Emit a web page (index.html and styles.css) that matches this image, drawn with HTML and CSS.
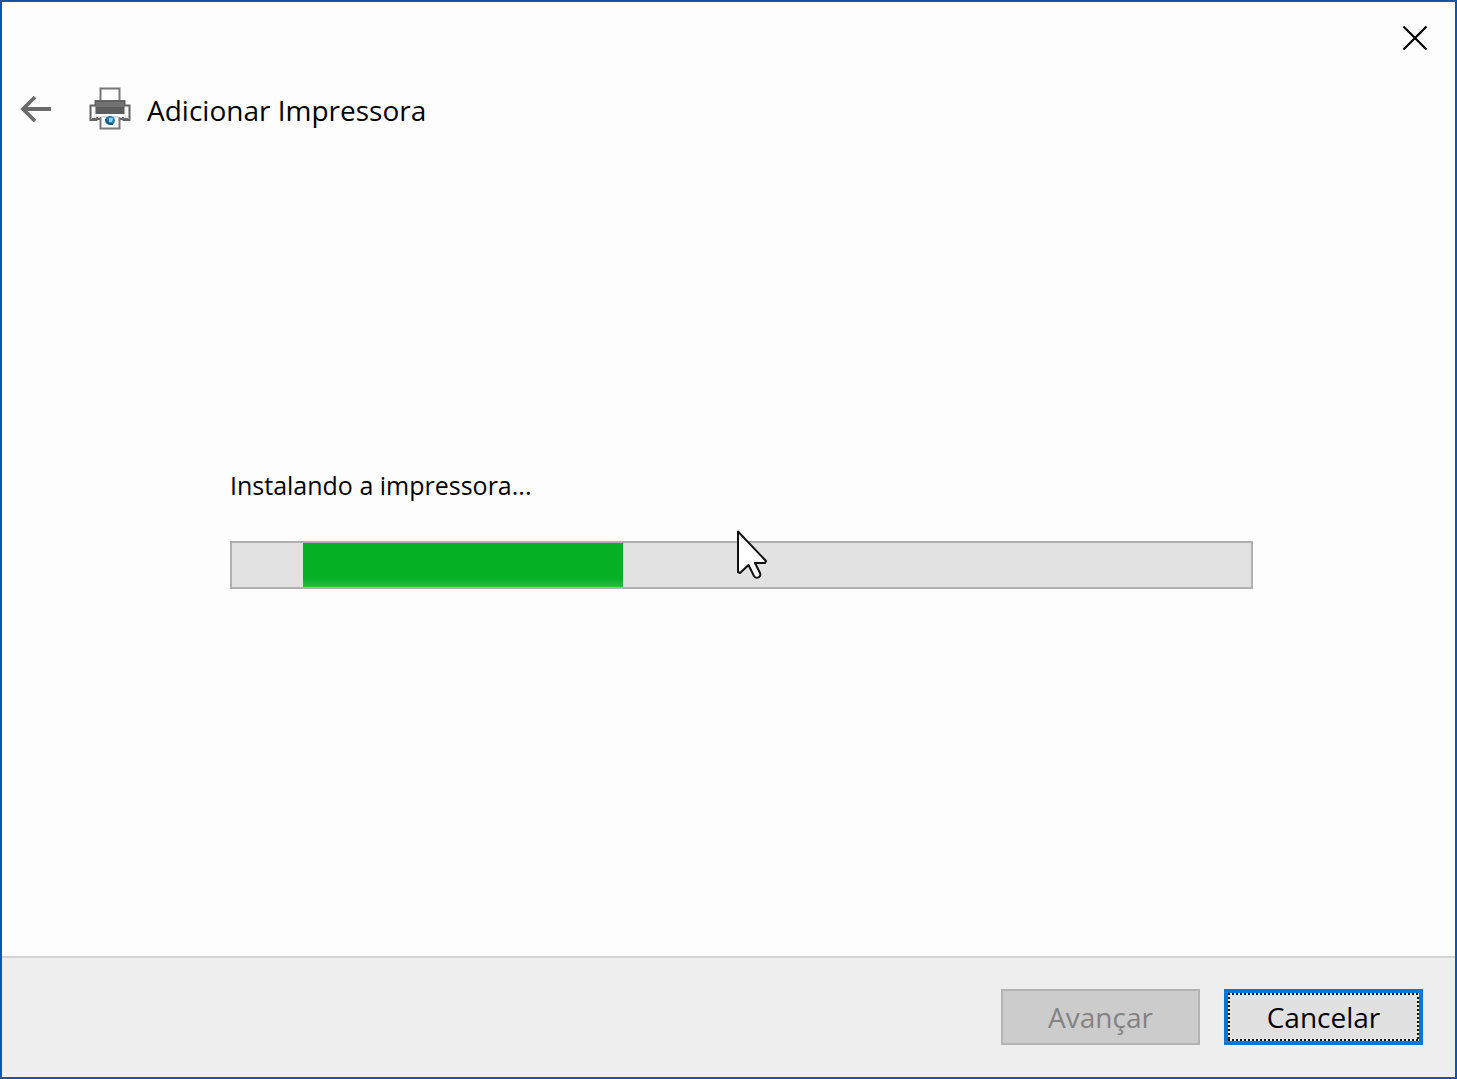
FILE: index.html
```html
<!DOCTYPE html>
<html lang="pt-BR">
<head>
<meta charset="utf-8">
<meta name="viewport" content="width=device-width, initial-scale=1">
<title>Adicionar Impressora</title>
<link rel="stylesheet" href="styles.css">
</head>
<body>
<div class="wizard" role="dialog" aria-labelledby="wizard-title">
  <div class="titlebar">
    <button class="icon-button close" type="button" aria-label="Fechar">
      <svg width="28" height="28" viewBox="0 0 28 28" aria-hidden="true">
        <path d="M2.500 2.500 25.500 25.500M25.500 2.500 2.500 25.500" fill="none" stroke="#000" stroke-width="2.200"/>
      </svg>
    </button>
  </div>

  <header class="header">
    <button class="icon-button" type="button" aria-label="Voltar">
      <svg width="32" height="28" viewBox="0 0 32 28" aria-hidden="true">
        <path d="M32 15H4M16 3 4 15 16 27" fill="none" stroke="#6b6b6b" stroke-width="3.800"/>
      </svg>
    </button>
    <svg class="printer" width="42" height="43" viewBox="0 0 42 43" aria-hidden="true">
      <path d="M11.500 16V1.500h19V16" fill="#fff" stroke="#777" stroke-width="2"/>
      <path d="M1.500 18.500h5V14h29v4.500h5V33h-6l-1.500-5h-24l-1.500 5h-6z" fill="#eee" stroke="#666" stroke-width="2"/>
      <path d="M6.500 14.500h29V27h-29z" fill="#5b5b5b"/>
      <path d="M7 15h28v5H7z" fill="#727272"/>
      <path d="M4 21v10M38 21v10" stroke="#fff" stroke-width="2"/>
      <path d="M8 27h26l1 3H7z" fill="#fff"/>
      <path d="M3 32h36" stroke="#666" stroke-width="2"/>
      <path d="M11.500 30v11.500h19V30" fill="#fff" stroke="#777" stroke-width="2"/>
      <path d="M12.500 30h17" stroke="#bbb"/>
      <ellipse cx="21" cy="33.500" rx="5" ry="4.500" fill="#257eac"/>
      <path d="M20 31q4-1 4 1l-1 3h-3z" fill="#8bd0e6"/>
      <path d="M17 32q1 6 7 5" fill="none" stroke="#174d72" stroke-width="1.500"/>
    </svg>
    <h1 class="title" id="wizard-title">Adicionar Impressora</h1>
  </header>

  <main class="content">
    <p class="status" id="status">Instalando a impressora...</p>
    <div class="progress" role="progressbar" aria-labelledby="status">
      <div class="progress-chunk"></div>
      <svg class="cursor" width="32" height="52" viewBox="0 0 32 52" aria-hidden="true">
        <path d="M2 2.500V43l2 1 8.500-8 5.500 11q2 3 5 1 2-1 1-4l-5-10h10l1-2z" fill="#fff" stroke="#111" stroke-width="2" stroke-linejoin="round"/>
      </svg>
    </div>
  </main>

  <footer class="footer">
    <button class="button" type="button" disabled>Avançar</button>
    <button class="button button-default" type="button">Cancelar</button>
  </footer>
</div>
</body>
</html>
```
FILE: styles.css
```css
* {
  box-sizing: border-box;
}

body {
  margin: 0;
  font-family: "Open Sans", "Noto Sans", sans-serif;
  color: #000;
}

.wizard {
  display: flex;
  flex-direction: column;
  min-height: 100vh;
  border: 2px solid #0b57b0;
  background: #fdfdfd;
}

.titlebar {
  display: flex;
  justify-content: flex-end;
  padding: 22px 26px 0;
}

.icon-button {
  display: flex;
  padding: 0;
  border: 0;
  background: none;
}

.header {
  display: flex;
  align-items: center;
  padding: 30px 17px 0;
}

.printer {
  margin: 0 16px 0 38px;
}

.title {
  margin: 0;
  padding-top: 4px;
  font-size: 28px;
  line-height: 48px;
  font-weight: 400;
}

.content {
  flex: 1;
  padding: 331px 202px 48px 228px;
}

.status {
  margin: 0;
  font-size: 25px;
  line-height: 40px;
}

.progress {
  position: relative;
  height: 48px;
  margin-top: 36px;
  border: 2px solid #b0b0b0;
  background: #e2e2e2;
}

.progress-chunk {
  width: 320px;
  height: 100%;
  margin-left: 71px;
  background: linear-gradient(#06b025 80%, #2cba48);
}

.cursor {
  position: absolute;
  top: -14px;
  left: 504px;
}

.footer {
  display: flex;
  justify-content: flex-end;
  gap: 24px;
  padding: 31px 32px 32px;
  border-top: 2px solid #d4d4d4;
  background: #eee;
}

.button {
  min-width: 199px;
  height: 56px;
  padding: 0 16px;
  border: 2px solid #b3b3b3;
  background: #ccc;
  font: 28px/40px "Open Sans", "Noto Sans", sans-serif;
  color: #838383;
}

.button-default {
  border: 4px solid #0078d7;
  background:
    repeating-linear-gradient(90deg, #111 0 2px, #eee 2px 4px) top / 100% 2px no-repeat,
    repeating-linear-gradient(90deg, #111 0 2px, #eee 2px 4px) bottom / 100% 2px no-repeat,
    repeating-linear-gradient(#111 0 2px, #eee 2px 4px) left / 2px 100% no-repeat,
    repeating-linear-gradient(#111 0 2px, #eee 2px 4px) right / 2px 100% no-repeat,
    #e1e1e1;
  background-origin: padding-box;
  background-clip: padding-box;
  color: #000;
}
```
